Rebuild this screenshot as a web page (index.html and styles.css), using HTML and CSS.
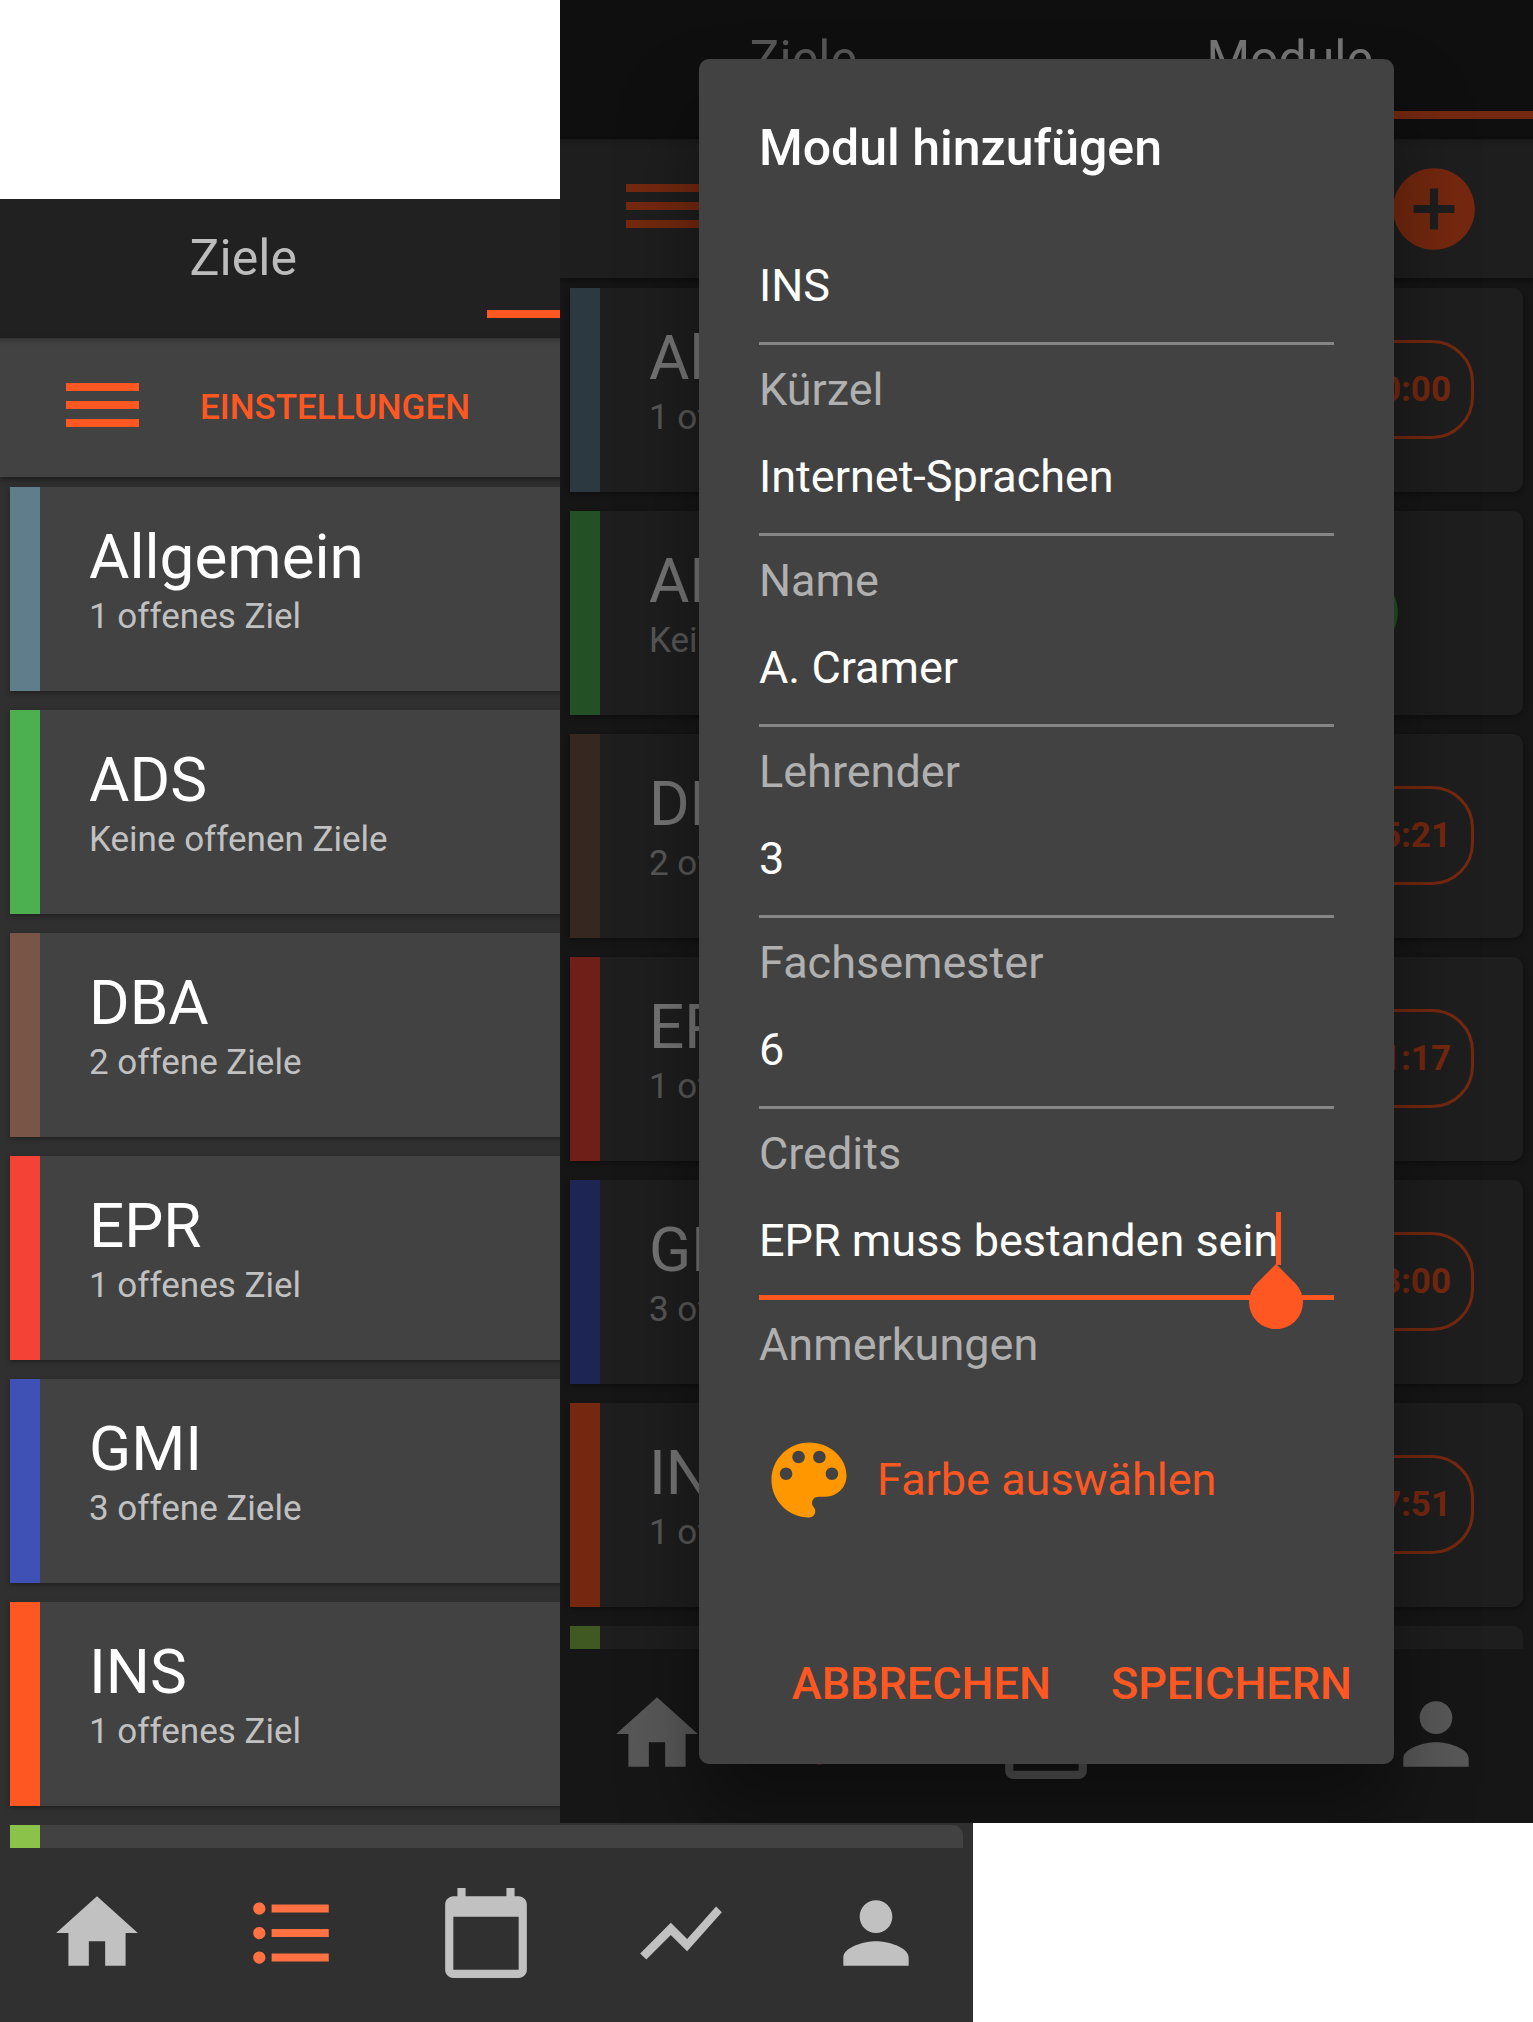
FILE: index.html
```html
<!DOCTYPE html>
<html lang="de">
<head>
<meta charset="utf-8">
<meta name="viewport" content="width=device-width, initial-scale=1">
<title>Module</title>
<link rel="stylesheet" href="styles.css">
</head>
<body>
<svg class="sprite" aria-hidden="true">
  <symbol id="i-menu" viewBox="0 0 73 44"><path d="M0 0h73v8H0zM0 18h73v8H0zM0 36h73v8H0z"/></symbol>
  <symbol id="i-add" viewBox="0 0 24 24"><path d="M12 2C6.48 2 2 6.48 2 12s4.48 10 10 10 10-4.48 10-10S17.52 2 12 2zm5 11h-4v4h-2v-4H7v-2h4V7h2v4h4v2z"/></symbol>
  <symbol id="i-check" viewBox="0 0 24 24"><path d="M12 2C6.48 2 2 6.48 2 12s4.48 10 10 10 10-4.48 10-10S17.52 2 12 2zm-2 15l-5-5 1.41-1.41L10 14.17l7.59-7.59L19 8l-9 9z"/></symbol>
  <symbol id="i-home" viewBox="0 0 24 24"><path d="M10 20v-6h4v6h5v-8h3L12 3 2 12h3v8z"/></symbol>
  <symbol id="i-list" viewBox="0 0 24 24"><path d="M4 10.5c-.83 0-1.5.67-1.5 1.5s.67 1.5 1.5 1.5 1.5-.67 1.5-1.5-.67-1.5-1.5-1.5zm0-6c-.83 0-1.5.67-1.5 1.5S3.17 7.500 4 7.500 5.500 6.830 5.500 6 4.830 4.500 4 4.500zm0 12c-.83 0-1.5.68-1.5 1.5s.68 1.5 1.5 1.5 1.5-.68 1.5-1.5-.67-1.5-1.5-1.5zM7 19h14v-2H7v2zm0-6h14v-2H7v2zm0-8v2h14V5H7z"/></symbol>
  <symbol id="i-calendar" viewBox="0 0 24 24"><path d="M20 3h-1V1h-2v2H7V1H5v2H4c-1.100 0-2 .9-2 2v16c0 1.100.9 2 2 2h16c1.100 0 2-.9 2-2V5c0-1.100-.9-2-2-2zm0 18H4V8h16v13z"/></symbol>
  <symbol id="i-chart" viewBox="0 0 24 24"><path d="M3.500 18.490l6-6.010 4 4L22 6.920l-1.410-1.410-7.090 7.970-4-4L2 16.990z"/></symbol>
  <symbol id="i-person" viewBox="0 0 24 24"><path d="M12 12c2.210 0 4-1.790 4-4s-1.790-4-4-4-4 1.790-4 4 1.790 4 4 4zm0 2c-2.670 0-8 1.340-8 4v2h16v-2c0-2.660-5.330-4-8-4z"/></symbol>
  <symbol id="i-palette" viewBox="0 0 24 24"><path d="M12 3c-4.970 0-9 4.030-9 9s4.030 9 9 9c.83 0 1.500-.67 1.500-1.500 0-.39-.15-.74-.39-1.010-.23-.26-.38-.61-.38-.99 0-.83.67-1.500 1.500-1.500H16c2.760 0 5-2.240 5-5 0-4.420-4.030-8-9-8zm-5.500 9c-.83 0-1.500-.67-1.500-1.500S5.670 9 6.500 9 8 9.670 8 10.500 7.330 12 6.500 12zm3-4C8.670 8 8 7.330 8 6.500S8.670 5 9.500 5s1.500.67 1.500 1.500S10.330 8 9.500 8zm5 0c-.83 0-1.500-.67-1.500-1.500S13.670 5 14.500 5s1.500.67 1.500 1.500S15.330 8 14.500 8zm3 4c-.83 0-1.500-.67-1.500-1.500S16.670 9 17.500 9s1.500.67 1.500 1.500-.67 1.500-1.500 1.500z"/></symbol>
  <symbol id="i-handle" viewBox="0 0 54 65"><path d="M27 0L46 19A27 27 0 1 1 8 19z"/></symbol>
</svg>

<main class="stage">
  <section class="phone phone-back" aria-label="Modulliste">
    <div class="tabs">
      <button class="tab" type="button">Ziele</button>
      <button class="tab is-active" type="button">Module</button>
    </div>
    <div class="toolbar">
      <button class="icon-button" type="button" aria-label="Menü"><svg class="menu-icon"><use href="#i-menu"/></svg></button>
      <button class="settings" type="button">EINSTELLUNGEN</button>
    </div>
    <div class="list">
      <article class="card bluegrey"><div><h2>Allgemein</h2><p>1 offenes Ziel</p></div></article>
      <article class="card green"><div><h2>ADS</h2><p>Keine offenen Ziele</p></div></article>
      <article class="card brown"><div><h2>DBA</h2><p>2 offene Ziele</p></div></article>
      <article class="card red"><div><h2>EPR</h2><p>1 offenes Ziel</p></div></article>
      <article class="card indigo"><div><h2>GMI</h2><p>3 offene Ziele</p></div></article>
      <article class="card orange"><div><h2>INS</h2><p>1 offenes Ziel</p></div></article>
      <article class="card lime peek"></article>
    </div>
    <nav class="nav">
      <a href="#home" aria-label="Start"><svg class="icon"><use href="#i-home"/></svg></a>
      <a class="is-active" href="#module" aria-label="Module"><svg class="icon"><use href="#i-list"/></svg></a>
      <a href="#kalender" aria-label="Kalender"><svg class="icon"><use href="#i-calendar"/></svg></a>
      <a href="#statistik" aria-label="Statistik"><svg class="icon"><use href="#i-chart"/></svg></a>
      <a href="#profil" aria-label="Profil"><svg class="icon"><use href="#i-person"/></svg></a>
    </nav>
  </section>

  <section class="phone phone-front" aria-label="Modul hinzufügen">
    <div class="tabs">
      <button class="tab" type="button">Ziele</button>
      <button class="tab is-active" type="button">Module</button>
    </div>
    <div class="toolbar">
      <button class="icon-button" type="button" aria-label="Menü"><svg class="menu-icon"><use href="#i-menu"/></svg></button>
      <button class="icon-button add" type="button" aria-label="Hinzufügen"><svg class="icon"><use href="#i-add"/></svg></button>
    </div>
    <div class="list">
      <article class="card bluegrey"><div><h2>Allgemein</h2><p>1 offenes Ziel</p></div><span class="timer">0:00</span></article>
      <article class="card green"><div><h2>ADS</h2><p>Keine offenen Ziele</p></div><span class="done"><svg class="icon"><use href="#i-check"/></svg></span></article>
      <article class="card brown"><div><h2>DBA</h2><p>2 offene Ziele</p></div><span class="timer">5:21</span></article>
      <article class="card red"><div><h2>EPR</h2><p>1 offenes Ziel</p></div><span class="timer">1:17</span></article>
      <article class="card indigo"><div><h2>GMI</h2><p>3 offene Ziele</p></div><span class="timer">3:00</span></article>
      <article class="card orange"><div><h2>INS</h2><p>1 offenes Ziel</p></div><span class="timer">7:51</span></article>
      <article class="card lime peek"></article>
    </div>
    <nav class="nav">
      <a href="#home" aria-label="Start"><svg class="icon"><use href="#i-home"/></svg></a>
      <a class="is-active" href="#module" aria-label="Module"><svg class="icon"><use href="#i-list"/></svg></a>
      <a href="#kalender" aria-label="Kalender"><svg class="icon"><use href="#i-calendar"/></svg></a>
      <a href="#statistik" aria-label="Statistik"><svg class="icon"><use href="#i-chart"/></svg></a>
      <a href="#profil" aria-label="Profil"><svg class="icon"><use href="#i-person"/></svg></a>
    </nav>

    <div class="scrim">
      <form class="dialog" role="dialog" aria-labelledby="dialog-title">
        <h1 id="dialog-title">Modul hinzufügen</h1>
        <div class="fields">
          <div class="field"><input id="kuerzel" type="text" value="INS"><label for="kuerzel">Kürzel</label></div>
          <div class="field"><input id="name" type="text" value="Internet-Sprachen"><label for="name">Name</label></div>
          <div class="field"><input id="lehrender" type="text" value="A. Cramer"><label for="lehrender">Lehrender</label></div>
          <div class="field"><input id="semester" type="text" value="3"><label for="semester">Fachsemester</label></div>
          <div class="field"><input id="credits" type="text" value="6"><label for="credits">Credits</label></div>
          <div class="field is-focused">
            <input id="notizen" type="text" value="EPR muss bestanden sein"><label for="notizen">Anmerkungen</label>
            <span class="caret"></span>
            <svg class="handle"><use href="#i-handle"/></svg>
          </div>
        </div>
        <button class="color-picker" type="button"><svg class="palette"><use href="#i-palette"/></svg>Farbe auswählen</button>
        <div class="actions">
          <button type="button">ABBRECHEN</button>
          <button type="submit">SPEICHERN</button>
        </div>
      </form>
    </div>
  </section>
</main>
</body>
</html>
```
FILE: styles.css
```css
:root {
  --accent: #ff5722;
  --surface: #424242;
  --ground: #303030;
  --bar: #212121;
  --muted: #c1c1c1;
}

* { box-sizing: border-box; }

body {
  margin: 0;
  background: #fff;
  color: #fff;
  font-family: Roboto, "Liberation Sans", sans-serif;
}

h1, h2, p { margin: 0; }

button, input {
  padding: 0;
  border: 0;
  border-radius: 0;
  background: none;
  color: inherit;
  font: inherit;
}

svg { display: block; fill: currentColor; }

.sprite { position: absolute; width: 0; height: 0; }

/* Two phone screens, the front one covering part of the back one */
.stage {
  display: grid;
  grid-template-columns: minmax(0, 560fr) minmax(0, 413fr) minmax(0, 560fr);
  align-items: start;
}

.phone { grid-row: 1; background: var(--ground); }
.phone-back { grid-column: 1 / 3; margin-top: 199px; }
.phone-front { grid-column: 2 / 4; position: relative; overflow: hidden; }

.tabs {
  display: flex;
  padding-bottom: 20px;
  background: var(--bar);
}

.tab {
  flex: 1;
  padding: 29px 0 22px;
  border-bottom: 8px solid transparent;
  color: #bcbcbc;
  font-size: 50px;
  line-height: 60px;
}

.tab.is-active { border-bottom-color: var(--accent); color: #fff; }

.toolbar {
  display: flex;
  align-items: center;
  gap: 61px;
  min-height: 139px;
  padding: 0 50px 0 66px;
  background: var(--surface);
  box-shadow: inset 0 8px 6px -7px rgba(0, 0, 0, .3), 0 3px 6px rgba(0, 0, 0, .4);
  color: var(--accent);
}

.menu-icon { width: 73px; height: 44px; margin-bottom: 5px; }
.icon { width: 98px; height: 98px; }
.add { margin-left: auto; }

.settings { font-size: 35px; font-weight: 500; line-height: 42px; }

.list {
  display: flex;
  flex-direction: column;
  gap: 19px;
  padding: 10px 10px 0;
}

.card {
  display: flex;
  justify-content: space-between;
  min-height: 204px;
  padding: 33px 49px 0;
  border-left: 30px solid;
  border-radius: 0 10px 10px 0;
  background: var(--surface);
  box-shadow: 0 2px 5px rgba(0, 0, 0, .35);
}

.card h2 { color: #fff; font-size: 62px; font-weight: 400; line-height: 74px; }
.card p { margin-top: 2px; color: var(--muted); font-size: 35px; line-height: 42px; }

.peek { min-height: 23px; padding: 0; border-radius: 0 10px 0 0; box-shadow: none; }

.bluegrey { border-left-color: #607d8b; }
.green { border-left-color: #4caf50; }
.brown { border-left-color: #795548; }
.red { border-left-color: #f44336; }
.indigo { border-left-color: #3f51b5; }
.orange { border-left-color: var(--accent); }
.lime { border-left-color: #8bc34a; }

.timer {
  width: 234px;
  height: 99px;
  margin-top: 19px;
  padding: 26px 20px;
  border: 3px solid var(--accent);
  border-radius: 42px;
  color: var(--accent);
  font-size: 35px;
  font-weight: 700;
  line-height: 42px;
  text-align: right;
}

.done {
  display: flex;
  justify-content: center;
  width: 234px;
  margin-top: 19px;
  color: #4caf50;
}

.nav { display: flex; padding: 36px 0 40px; color: var(--muted); }
.nav a { display: flex; flex: 1; justify-content: center; color: inherit; }
.nav .is-active { color: #ff7043; }

/* Dialog */
.scrim {
  position: absolute;
  inset: 0;
  display: flex;
  align-items: center;
  padding: 0 139px;
  background: rgba(0, 0, 0, .54);
}

.dialog {
  flex: 1;
  min-width: 0;
  padding: 59px 60px 53px;
  border-radius: 10px;
  background: var(--surface);
  box-shadow: 0 50px 80px rgba(0, 0, 0, .4);
}

.dialog h1 {
  margin-bottom: 81px;
  font-size: 50px;
  font-weight: 500;
  line-height: 60px;
}

.fields { display: grid; gap: 33px; }

.field {
  position: relative;
  display: flex;
  flex-direction: column;
  gap: 18px;
  font-size: 45px;
  line-height: 54px;
}

.field input {
  width: 100%;
  height: 86px;
  padding-bottom: 30px;
  border-bottom: 3px solid #858585;
  outline: none;
}

.field label { color: #b0b0b0; }

.is-focused input { padding-bottom: 28px; border-bottom: 5px solid var(--accent); }

.caret {
  position: absolute;
  top: -2px;
  right: 53px;
  width: 5px;
  height: 53px;
  background: var(--accent);
}

.handle {
  position: absolute;
  top: 50px;
  right: 31px;
  width: 54px;
  height: 65px;
  color: var(--accent);
}

.color-picker {
  display: flex;
  align-items: center;
  gap: 18px;
  margin-top: 58px;
  color: var(--accent);
  font-size: 45px;
  line-height: 54px;
}

.palette { width: 100px; height: 100px; color: #ff9800; }

.actions {
  display: flex;
  justify-content: flex-end;
  gap: 60px;
  margin: 127px -18px 0 0;
  color: var(--accent);
  font-size: 45px;
  font-weight: 500;
  line-height: 54px;
}
```
